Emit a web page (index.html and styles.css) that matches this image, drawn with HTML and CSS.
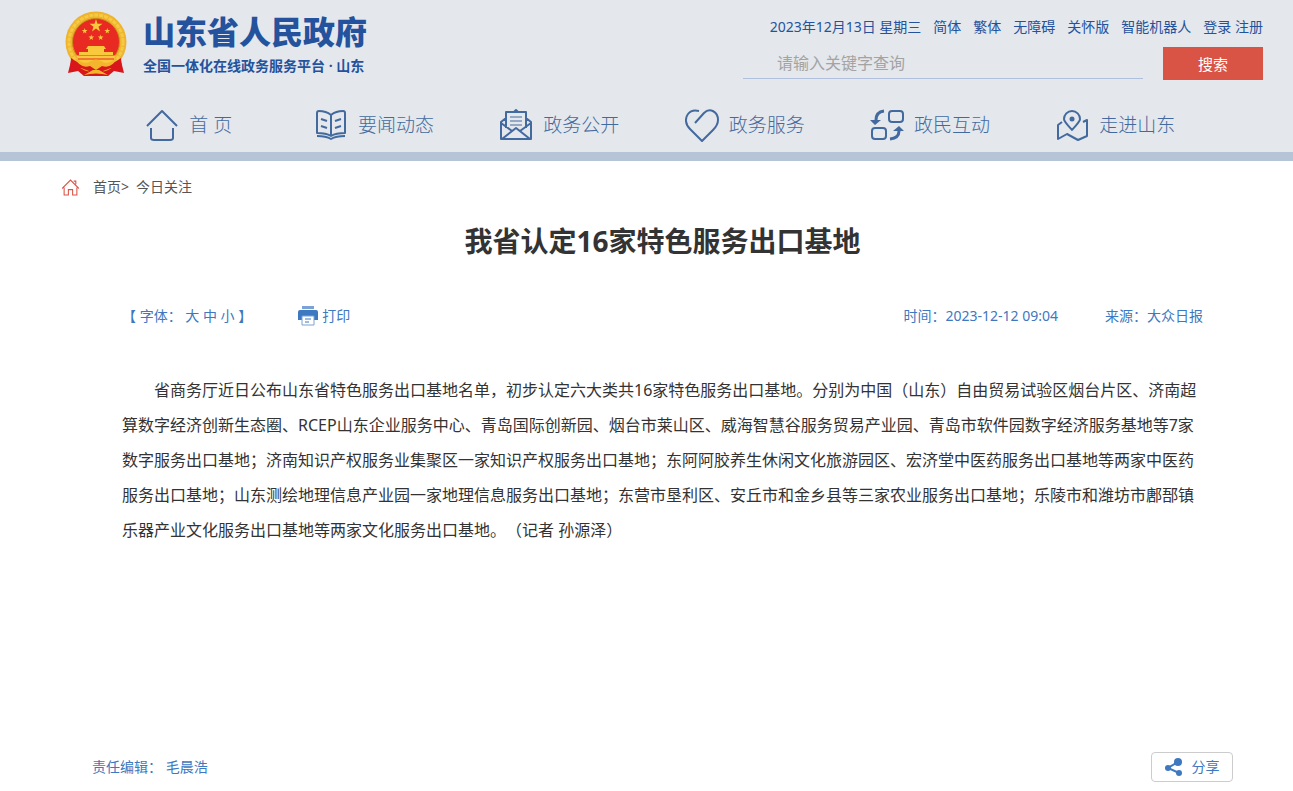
FILE: index.html
```html
<!DOCTYPE html>
<html lang="zh-CN">
<head>
    <meta charset="UTF-8">
    <meta name="viewport" content="width=device-width, initial-scale=1.0">
    <title>我省认定16家特色服务出口基地</title>
    <link rel="stylesheet" href="styles.css">
</head>
<body>
    <header class="header">
        <div class="header-top">
            <a class="logo" href="#">
                <svg class="emblem" viewBox="0 0 64 66" aria-hidden="true">
                    <path d="M9 42 L4 62 L14 60 L20 65 H44 L50 60 L60 62 L55 42 Z" fill="#d8161b"/>
                    <circle cx="32" cy="31" r="30.500" fill="#eeb42c"/>
                    <circle cx="32" cy="31" r="27" fill="none" stroke="#f6c945" stroke-width="3" stroke-dasharray="4 1"/>
                    <circle cx="32" cy="31" r="23.500" fill="#e82a22" stroke="#c98a1c"/>
                    <path id="star" d="M32 8 L33.500 12.700 H38.500 L34.500 15.700 L36 20.500 L32 17.500 L28 20.500 L29.500 15.700 L25.500 12.700 H30.500 Z" fill="#f9c83c"/>
                    <use href="#star" transform="translate(6.600 13.500) scale(.44)"/>
                    <use href="#star" transform="translate(29.200 13.500) scale(.44)"/>
                    <use href="#star" transform="translate(13.200 20) scale(.44)"/>
                    <use href="#star" transform="translate(22.600 20) scale(.44)"/>
                    <path d="M24 35 H40 L42 38 H40 V41 H49 V44 H15 V41 H24 V38 H22 Z" fill="#f9c83c"/>
                    <path d="M12 44.500 H52 Q50 49 46 52 H18 Q14 49 12 44.500 Z" fill="#f9c83c"/>
                    <path d="M14 48 H50" stroke="#e82a22"/>
                    <path d="M7 47 Q20 57 32 50 Q44 57 57 47 L58 60 L47 57 L39 60 L44 65 L32 61 L20 65 L25 60 L17 57 L6 60 Z" fill="#d8161b"/>
                    <path d="M11 47 Q21 55 27 50 Q32 47 37 50 Q43 55 53 47 Q48 58 38 55 L32 59 L26 55 Q16 58 11 47 Z M20 64 L29 59 L35 59 L44 64 Q32 61 20 64 Z" fill="#f3b52c"/>
                </svg>
                <span class="logo-text">
                    <span class="logo-name">山东省人民政府</span>
                    <span class="logo-sub">全国一体化在线政务服务平台 · 山东</span>
                </span>
            </a>
            <div class="tools">
                <div class="top-links">
                    <span>2023年12月13日 星期三</span>
                    <a href="#">简体</a>
                    <a href="#">繁体</a>
                    <a href="#">无障碍</a>
                    <a href="#">关怀版</a>
                    <a href="#">智能机器人</a>
                    <span><a href="#">登录</a> <a href="#">注册</a></span>
                </div>
                <form class="search">
                    <input type="text" placeholder="请输入关键字查询" aria-label="请输入关键字查询">
                    <button type="button">搜索</button>
                </form>
            </div>
        </div>
        <nav class="nav">
            <a href="#">
                <svg viewBox="0 0 34 34"><path d="M2 18 L17 3 L32 18 M6 20 V30 Q6 32 9 32 H25 Q28 32 28 30 V20"/></svg>
                首 页
            </a>
            <a href="#">
                <svg viewBox="0 0 34 34"><path d="M17 7 Q12 3 5 3 Q3 3 3 5 V25 Q12 25 17 28 Q22 25 31 25 V5 Q31 3 29 3 Q22 3 17 7 Z V28 M3 28 Q12 28 17 31 Q22 28 31 28 M7 11 L13 13 M7 18 L13 20 M27 11 L21 13 M27 18 L21 20"/></svg>
                要闻动态
            </a>
            <a href="#">
                <svg viewBox="0 0 34 34"><path d="M7 10 L2 14 V31 H32 V14 L27 10 M7 20 V4 H27 V20 M15 4 L17 2 L19 4 M2 15 L13 23 M32 15 L21 23 M3 31 L17 20 L31 31"/><path class="thin" d="M11 9 H23 M11 13 H23 M11 17 H23"/></svg>
                政务公开
            </a>
            <a href="#">
                <svg viewBox="0 0 34 34"><path d="M10 15 L19 5 C25 -1 33 4 33 12 C33 16 31 19 28 22 L17 33 L5 21 C0 16 0 10 3 6 C6 2 10 2 14 3"/></svg>
                政务服务
            </a>
            <a href="#">
                <svg viewBox="0 0 34 34"><rect x="19" y="3" width="14" height="11" rx="3"/><rect x="2" y="20" width="14" height="11" rx="3"/><path class="arrow" d="M14 3 Q6 4 6 12 M20 31 Q29 30 29 23"/><path class="solid" d="M0 12 H11 L5 17 Z M23 23 H34 L29 18 Z"/></svg>
                政民互动
            </a>
            <a href="#">
                <svg viewBox="0 0 34 34"><path d="M17 22 C13 17 9 14 9 11 A8 8 0 0 1 25 11 C25 14 21 17 17 22 Z M7 14 L3 17 V31 L12 26 L23 32 L32 28 V12 L28 14"/><circle class="solid" cx="17" cy="11" r="2.500"/></svg>
                走进山东
            </a>
        </nav>
    </header>

    <main class="main">
        <div class="crumb">
            <svg viewBox="0 0 16 16" aria-hidden="true"><path d="M0 9 L8 1 L16 9 M2 8 V15 H6 V10 H10 V15 H14 V8 M11 2 H13 V5"/></svg>
            <span><a href="#">首页</a>&gt;</span>
            <a href="#">今日关注</a>
        </div>
        <article class="article">
            <h1>我省认定16家特色服务出口基地</h1>
            <div class="meta">
                <div class="font-size">【 字体： <button type="button">大</button> <button type="button">中</button> <button type="button">小</button> 】</div>
                <button class="print" type="button">
                    <svg viewBox="0 0 20 20" aria-hidden="true">
                        <path d="M4 0 H16 V3 H4 Z" fill="#7ba2d4"/>
                        <path d="M0 6 Q0 4 2 4 H18 Q20 4 20 6 V14 H16 V10 H4 V14 H0 Z" fill="#3d78c0"/>
                        <path d="M4 10 H16 V19 H4 Z" fill="#fff" stroke="#7ba2d4"/>
                        <path d="M7 13 H13 M7 16 H11" stroke="#3d78c0"/>
                    </svg>
                    打印
                </button>
                <span class="time">时间：2023-12-12 09:04</span>
                <span>来源：大众日报</span>
            </div>
            <p>省商务厅近日公布山东省特色服务出口基地名单，初步认定六大类共16家特色服务出口基地。分别为中国（山东）自由贸易试验区烟台片区、济南超算数字经济创新生态圈、RCEP山东企业服务中心、青岛国际创新园、烟台市莱山区、威海智慧谷服务贸易产业园、青岛市软件园数字经济服务基地等7家数字服务出口基地；济南知识产权服务业集聚区一家知识产权服务出口基地；东阿阿胶养生休闲文化旅游园区、宏济堂中医药服务出口基地等两家中医药服务出口基地；山东测绘地理信息产业园一家地理信息服务出口基地；东营市垦利区、安丘市和金乡县等三家农业服务出口基地；乐陵市和潍坊市鄌郚镇乐器产业文化服务出口基地等两家文化服务出口基地。（记者 孙源泽）</p>
        </article>
        <div class="bottom">
            <span>责任编辑： 毛晨浩</span>
            <button class="share" type="button">
                <svg viewBox="0 0 18 18" aria-hidden="true"><path d="M13 4 L3 10 L14 15" fill="none" stroke="#3d78c0" stroke-width="2"/><circle cx="13" cy="4" r="4"/><circle cx="3" cy="10" r="3"/><circle cx="14" cy="15" r="3"/></svg>
                分享
            </button>
        </div>
    </main>
</body>
</html>
```
FILE: styles.css
```css
* {
    box-sizing: border-box;
}
body {
    margin: 0;
    background: #fff;
    color: #333;
    font-family: "Noto Sans", "Noto Sans CJK SC", sans-serif;
    font-size: 14px;
    line-height: 20px;
    text-spacing-trim: space-all;
}
a {
    color: inherit;
    text-decoration: none;
}
button {
    padding: 0;
    border: 0;
    background: none;
    color: inherit;
    font: inherit;
    cursor: pointer;
}
.header {
    background: #e4e7ec;
    border-bottom: 9px solid #b5c4d6;
}
.header-top {
    display: flex;
    justify-content: space-between;
    height: 98px;
    padding: 10px 30px 0 64px;
    color: #24529c;
}
.logo {
    display: flex;
    gap: 15px;
}
.emblem {
    width: 64px;
    height: 68px;
}
.logo-name,
.logo-sub {
    display: block;
    font-weight: bold;
    white-space: nowrap;
}
.logo-name {
    font-size: 32px;
    font-weight: 900;
    line-height: 44px;
}
.logo-sub {
    font-size: 14px;
    line-height: 24px;
}
.tools {
    padding-top: 7px;
}
.top-links {
    display: flex;
    justify-content: flex-end;
    gap: 12px;
    white-space: nowrap;
}
.search {
    display: flex;
    gap: 20px;
    margin-top: 10px;
}
.search input {
    width: 400px;
    height: 32px;
    padding: 0 34px;
    border: 0;
    border-bottom: 1px solid #b0c0dc;
    background: none;
    font: inherit;
    font-size: 16px;
}
.search input::placeholder {
    color: #a3a3a3;
}
.search button {
    width: 100px;
    height: 33px;
    background: #d95445;
    color: #fff;
    font-size: 15px;
}
.nav {
    display: grid;
    grid-template-columns: repeat(6, 1fr);
    height: 54px;
    padding: 0 85px 0 96px;
    color: #426a9f;
    font-size: 19px;
    font-weight: 300;
}
.nav a {
    display: flex;
    align-items: center;
    justify-content: center;
    gap: 10px;
    white-space: nowrap;
}
.nav svg {
    width: 34px;
    height: 34px;
    fill: none;
    stroke: #426a9f;
    stroke-width: 2;
    stroke-linejoin: round;
}
.nav .thin {
    stroke-width: 1;
}
.nav .arrow {
    stroke-width: 3;
}
.nav .solid {
    fill: #426a9f;
    stroke: none;
}
.main {
    padding: 16px 30px 9px 62px;
}
.crumb {
    display: flex;
    align-items: center;
    gap: 7px;
    color: #555;
}
.crumb svg {
    width: 17px;
    height: 17px;
    margin-right: 7px;
    fill: none;
    stroke: #d95445;
}
.article {
    min-height: 531px;
    padding: 0 60px;
}
.article h1 {
    margin: 24px 0 45px;
    font-size: 28px;
    line-height: 40px;
    text-align: center;
}
.meta {
    display: flex;
    align-items: center;
    color: #3d78c0;
}
.print {
    display: flex;
    align-items: center;
    gap: 4px;
    margin-left: 46px;
}
.print svg {
    width: 20px;
    height: 20px;
}
.time {
    margin: 0 47px 0 auto;
}
.article p {
    margin: 47px 0 0;
    font-size: 16px;
    line-height: 35px;
    text-indent: 2em;
}
.bottom {
    display: flex;
    align-items: center;
    justify-content: space-between;
    padding: 0 30px;
    color: #3d78c0;
}
.share {
    display: flex;
    align-items: center;
    justify-content: center;
    gap: 9px;
    width: 82px;
    height: 30px;
    border: 1px solid #ccc;
    border-radius: 4px;
}
.share svg {
    width: 18px;
    height: 18px;
    fill: #3d78c0;
}
```
